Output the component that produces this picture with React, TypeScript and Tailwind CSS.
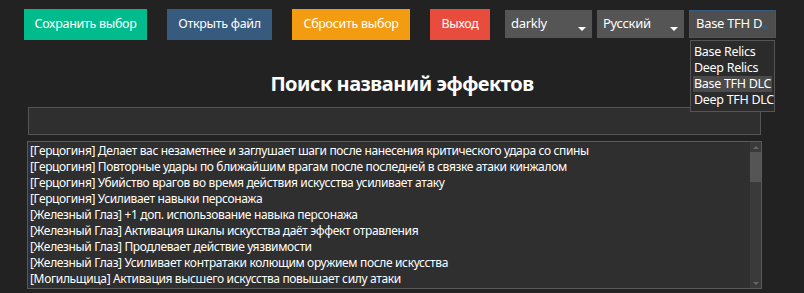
const items = [
  '[Герцогиня] Делает вас незаметнее и заглушает шаги после нанесения критического удара со спины',
  '[Герцогиня] Повторные удары по ближайшим врагам после последней в связке атаки кинжалом',
  '[Герцогиня] Убийство врагов во время действия искусства усиливает атаку',
  '[Герцогиня] Усиливает навыки персонажа',
  '[Железный Глаз] +1 доп. использование навыка персонажа',
  '[Железный Глаз] Активация шкалы искусства даёт эффект отравления',
  '[Железный Глаз] Продлевает действие уязвимости',
  '[Железный Глаз] Усиливает контратаки колющим оружием после искусства',
  '[Могильщица] Активация высшего искусства повышает силу атаки',
]

const options = ['Base Relics', 'Deep Relics', 'Base TFH DLC', 'Deep TFH DLC']

function Combo({ label, active }: { label: string; active?: boolean }) {
  return (
    <div
      className={`relative w-[87px] h-[28px] pl-[6px] flex items-center text-[13px] tracking-[-0.3px] text-white whitespace-nowrap ${
        active ? 'bg-[#4e4e4e] border border-[#375a7f]' : 'bg-[#555555]'
      }`}
    >
      {label}
      <span
        className={`absolute right-[6px] bottom-[7px] w-0 h-0 border-l-[4px] border-r-[4px] border-t-[4px] border-l-transparent border-r-transparent ${
          active ? 'border-t-[#375a7f]' : 'border-t-white'
        }`}
      />
    </div>
  )
}

export default function App() {
  return (
    <div
      className="w-[804px] h-[293px] bg-[#222222] text-white relative overflow-hidden"
      style={{ fontFamily: '"Noto Sans", "Open Sans", sans-serif' }}
    >
      <div className="flex items-start pt-[9px] pl-[24px] text-[12.5px] tracking-[-0.3px]">
        <button className="w-[123px] h-[31px] bg-[#00bc8c]">Сохранить выбор</button>
        <button className="ml-[20px] w-[105px] h-[31px] bg-[#375a7f]">Открыть файл</button>
        <button className="ml-[20px] w-[118px] h-[31px] bg-[#f39c12]">Сбросить выбор</button>
        <button className="ml-[20px] w-[60px] h-[31px] bg-[#e74c3c]">Выход</button>
        <div className="ml-[15px] mt-[1px] flex gap-[5px]">
          <Combo label="darkly" />
          <Combo label="Русский" />
          <Combo label="Base TFH D" active />
        </div>
      </div>

      <h1 className="mt-[30px] text-center text-[20px] font-bold leading-[28px] tracking-[-0.5px]">
        Поиск названий эффектов
      </h1>

      <div className="mx-[28px] mt-[9px] w-[733px] h-[28px] bg-[#2f2f2f] border border-[#555555]" />

      <div className="ml-[27px] mt-[6px] w-[735px] h-[148px] bg-[#2f2f2f] border border-[#5a5a5a] flex">
        <div className="flex-1 pl-[2px] pt-[1px] text-[12px] leading-[16px] tracking-[-0.35px] overflow-hidden">
          {items.map((t) => (
            <div key={t} className="whitespace-nowrap">
              {t}
            </div>
          ))}
        </div>
        <div className="w-[11px] bg-[#3a3a3a] flex flex-col">
          <div className="h-[10px] flex items-center justify-center">
            <span className="w-0 h-0 border-l-[3px] border-r-[3px] border-b-[3px] border-l-transparent border-r-transparent border-b-[#666666]" />
          </div>
          <div className="h-[30px] bg-[#555555]" />
          <div className="flex-1" />
          <div className="h-[10px] flex items-center justify-center">
            <span className="w-0 h-0 border-l-[3px] border-r-[3px] border-t-[3px] border-l-transparent border-r-transparent border-t-[#666666]" />
          </div>
        </div>
      </div>

      <div className="absolute left-[690px] top-[40px] w-[85px] bg-[#2b2b2b] border border-[#555555] py-[3px] px-[2px] text-[12.5px] leading-[16px] tracking-[-0.3px]">
        {options.map((o) => (
          <div
            key={o}
            className={`pl-[1px] whitespace-nowrap ${o === 'Base TFH DLC' ? 'bg-[#4a4a4a]' : ''}`}
          >
            {o}
          </div>
        ))}
      </div>
    </div>
  )
}
